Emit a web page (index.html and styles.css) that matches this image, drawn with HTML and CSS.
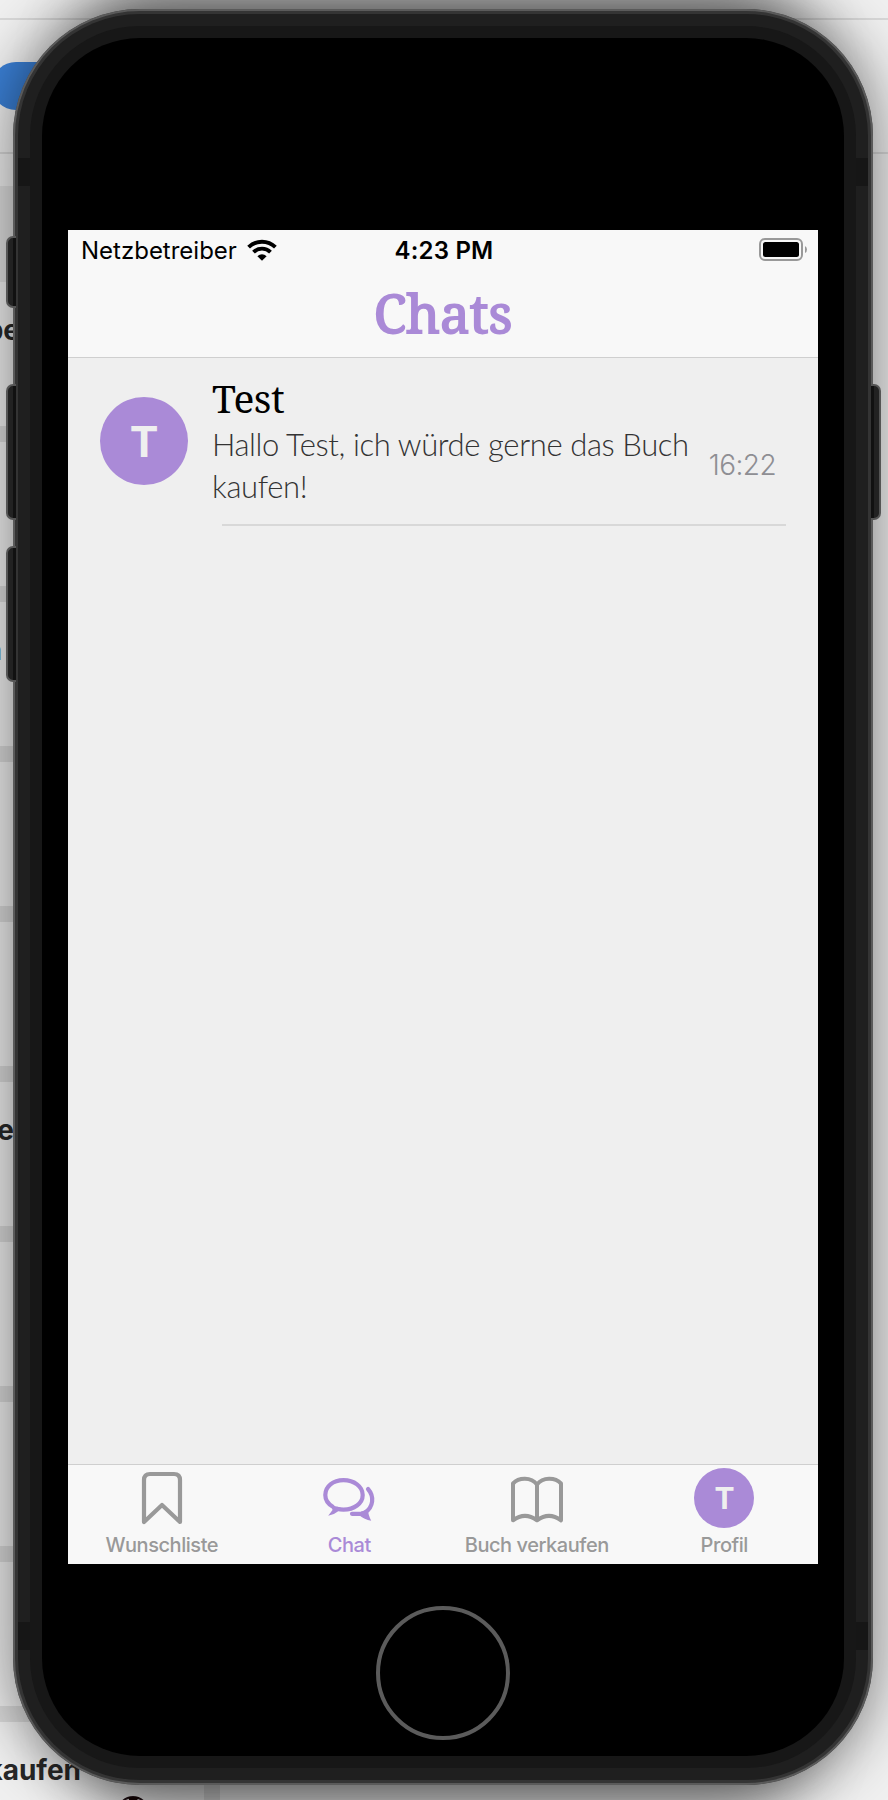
FILE: index.html
```html
<!DOCTYPE html>
<html lang="de">
<head>
<meta charset="utf-8">
<title>Chats</title>
<link rel="stylesheet" href="styles.css">
</head>
<body>
<main class="desktop">
  <div class="backdrop">
    <i class="line" style="top:18px"></i>
    <i class="line" style="top:152px"></i>
    <i class="band tall" style="top:186px"></i>
    <i class="band" style="top:426px"></i>
    <i class="band" style="top:586px"></i>
    <i class="band" style="top:746px"></i>
    <i class="band" style="top:906px"></i>
    <i class="band" style="top:1066px"></i>
    <i class="band" style="top:1226px"></i>
    <i class="band" style="top:1386px"></i>
    <i class="band" style="top:1546px"></i>
    <i class="band" style="top:1706px"></i>
    <i class="divider"></i>
    <i class="pill"></i>
    <span class="bg-text t1">be</span>
    <span class="bg-text t2">n</span>
    <span class="bg-text t3">e</span>
    <span class="bg-text t4">kaufen</span>
    <svg class="ball" viewBox="0 0 32 32"><circle cx="16" cy="16" r="15" fill="#ddd" stroke="#241418" stroke-width="2"/><path d="M11 1h11l-3 5h-6zM1 10l5-5 1 6zM31 10l-5-5-1 6z" fill="#180606"/></svg>
  </div>
  <div class="shade"></div>
  <div class="phone">
    <div class="rim">
      <i class="antenna a1"></i><i class="antenna a2"></i><i class="antenna a3"></i><i class="antenna a4"></i>
      <div class="bezel">
        <div class="face">
          <div class="screen">
            <header class="header">
              <div class="status">
                <div class="carrier">
                  <span>Netzbetreiber</span>
                  <svg class="wifi" viewBox="0 0 30 22"><g fill="none" stroke="#000" stroke-width="3.9"><path d="M1.6 8.2a19.2 19.2 0 0 1 26.8 0"/><path d="M6.5 13.1a12.2 12.2 0 0 1 17 0"/></g><path d="M10.4 17.2a6.6 6.6 0 0 1 9.2 0L15 21.8z"/></svg>
                </div>
                <span class="clock">4:23 PM</span>
                <svg class="battery" viewBox="0 0 48 23"><rect x="1" y="1" width="42" height="21" rx="5" fill="none" stroke="#999" stroke-width="2"/><rect x="4" y="4" width="36" height="15" rx="2.5"/><path d="M46 8q2 1 2 3.500t-2 3.500z" fill="#999"/></svg>
              </div>
              <h1 class="title">Chats</h1>
            </header>
            <section class="list">
              <article class="chat">
                <div class="avatar">T</div>
                <div class="content">
                  <h2 class="name">Test</h2>
                  <p class="message">Hallo Test, ich würde gerne das Buch<br>kaufen!</p>
                </div>
                <time class="time">16:22</time>
              </article>
            </section>
            <nav class="tabs">
              <div class="tab">
                <svg class="icon" viewBox="0 0 60 60"><path d="M12 54V12q0-6 6-6h24q6 0 6 6v42L30 37z" fill="none" stroke="#999" stroke-width="4.200" stroke-linejoin="round"/></svg>
                <span>Wunschliste</span>
              </div>
              <div class="tab active">
                <svg class="icon" viewBox="0 0 60 60"><g fill="none" stroke="#aa8ad7" stroke-width="4.200" stroke-linecap="round" stroke-linejoin="round"><path d="M13.500 38.500C8.500 35.500 6.300 31.500 6.300 27 6.300 18.500 14 12.200 24.500 12.200S43.700 18.500 43.700 27 35 41.600 24.500 41.600q-3.500 0-6.500-.8"/><path d="M49 21c6.500 7.500 5.500 18-3 23.500M33 45.800h11"/></g><path d="M12 37l1.500 5-4.300 5.700q6-1 10.800-5l2-3zM42 43.500l7-2q0 5 3.200 11.200-7-1.200-11.700-5.200z" fill="#aa8ad7"/></svg>
                <span>Chat</span>
              </div>
              <div class="tab">
                <svg class="icon" viewBox="0 0 60 60"><path d="M30 16.500C24 9 12 9.200 6 15.500V52.300Q18 43.500 30 52.300 42 43.500 54 52.300V15.500C48 9.200 36 9 30 16.500V52" fill="none" stroke="#999" stroke-width="4" stroke-linejoin="round"/></svg>
                <span>Buch verkaufen</span>
              </div>
              <div class="tab">
                <div class="icon mini-avatar">T</div>
                <span>Profil</span>
              </div>
            </nav>
          </div>
          <div class="home"></div>
        </div>
      </div>
    </div>
  </div>
  <i class="key mute"></i>
  <i class="key up"></i>
  <i class="key down"></i>
  <i class="key power"></i>
</main>
</body>
</html>
```
FILE: styles.css
```css
* { box-sizing: border-box; }
body { margin: 0; font-family: Inter, "Liberation Sans", sans-serif; }
.desktop { position: relative; width: 888px; height: 1800px; overflow: hidden; padding: 9px 15px 15px 13px; background: #f0f0f0; }

/* Window behind the simulator */
.backdrop, .shade { position: absolute; inset: 0; }
.backdrop i { position: absolute; left: 0; }
.backdrop .line { width: 888px; height: 2px; background: #d8d8d8; }
.band { width: 206px; height: 16px; background: #dadada; }
.band.tall { height: 96px; background: #e0e0e0; }
.backdrop .divider { left: 204px; top: 1706px; width: 16px; height: 94px; background: #dadada; }
.backdrop .pill { left: -8px; top: 62px; width: 90px; height: 48px; border-radius: 24px; background: #3b80d6; }
.bg-text { position: absolute; font-size: 28px; line-height: 32px; font-weight: 700; color: #292929; white-space: nowrap; }
.t1 { right: 868px; top: 314px; }
.t2 { right: 886px; top: 634px; }
.t3 { right: 874px; top: 1114px; }
.t4 { right: 807px; top: 1754px; }
.ball { position: absolute; left: 117px; top: 1796px; width: 32px; height: 32px; }
.shade::before { content: ""; position: absolute; left: 13px; top: 9px; width: 860px; height: 1776px; border-radius: 127px; box-shadow: 0 0 60px 4px rgba(0,0,0,.46); }
.shade::after { content: ""; position: absolute; left: 100px; top: 9px; width: 686px; height: 1776px; border-radius: 60px; box-shadow: 0 0 60px 24px rgba(0,0,0,.42); }

/* Side keys */
.key { position: absolute; left: 6px; width: 10px; height: 136px; border: 2px solid #555; border-right: 0; border-radius: 7px 0 0 7px; background: linear-gradient(90deg, #222 60%, #111 60%); }
.mute { top: 236px; height: 72px; }
.up { top: 384px; }
.down { top: 546px; }
.power { left: 871px; top: 384px; transform: scaleX(-1); }

/* Device body */
.phone { position: relative; height: 1776px; border-radius: 127px; padding: 5px; background: #343434; box-shadow: inset 0 0 0 2px #5a5a5a; }
.rim { position: relative; height: 1766px; padding: 12px; border-radius: 122px; background: #1f1f1f; }
.antenna { position: absolute; width: 12px; height: 28px; background: #161616; }
.a1 { left: 0; top: 144px; }
.a2 { right: 0; top: 144px; }
.a3 { left: 0; bottom: 130px; }
.a4 { right: 0; bottom: 130px; }
.bezel { height: 1742px; padding: 12px; border-radius: 110px; background: #171717; }
.face { height: 1718px; padding: 192px 26px 0; border-radius: 98px; background: #000; }
.home { width: 134px; height: 134px; margin: 42px auto 0; border: 4px solid #5b5b5b; border-radius: 50%; }

/* App screen */
.screen { height: 1334px; display: flex; flex-direction: column; background: #efefef; }
.header { height: 128px; background: #f8f8f8; border-bottom: 1px solid #cfcfcf; }
.status { display: grid; grid-template-columns: 1fr auto 1fr; align-items: center; height: 40px; padding: 0 11px 0 13px; font-size: 24px; color: #000; }
.carrier { display: flex; align-items: center; gap: 10px; }
.wifi { width: 30px; height: 22px; }
.clock { font-weight: 600; letter-spacing: .2px; }
.battery { width: 48px; height: 23px; margin-top: -2px; justify-self: end; }
.title { margin: 11px 0 0; text-align: center; font: 400 53px/64px "Noto Serif", "Liberation Serif", serif; color: #aa8ad7; -webkit-text-stroke: 1.8px #aa8ad7; }
.list { flex: 1; }
.chat { position: relative; display: flex; height: 168px; padding: 16px 42px 0 32px; }
.chat::after { content: ""; position: absolute; left: 154px; right: 32px; bottom: 0; height: 2px; background: #d8d8d8; }
.avatar { flex: none; display: grid; place-items: center; width: 88px; height: 88px; margin-top: 23px; border-radius: 50%; background: #aa8ad7; color: #efefef; font-size: 43px; font-weight: 700; }
.content { flex: 1; min-width: 0; margin-left: 24px; }
.name { margin: 0; font: 400 39px/48px "Noto Serif", "Liberation Serif", serif; letter-spacing: -.5px; color: #000; }
.message { margin: 1px 0 0; font: 300 31px/42px Lato, Inter, sans-serif; letter-spacing: -.38px; color: #333; white-space: nowrap; }
.time { margin-top: 74px; font-size: 28px; letter-spacing: -.6px; line-height: 34px; font-weight: 300; color: #8e8e93; }
.tabs { height: 100px; display: grid; grid-template-columns: repeat(4, 1fr); background: #f8f8f8; border-top: 1px solid #cfcfcf; }
.tab { display: flex; flex-direction: column; align-items: center; padding-top: 3px; color: #999; font-size: 20px; letter-spacing: -.45px; line-height: 24px; font-weight: 500; white-space: nowrap; }
.tab.active { color: #aa8ad7; }
.icon { width: 60px; height: 60px; margin-bottom: 5px; }
.mini-avatar { display: grid; place-items: center; border-radius: 50%; background: #aa8ad7; color: #efefef; font-size: 30px; font-weight: 700; }
```
